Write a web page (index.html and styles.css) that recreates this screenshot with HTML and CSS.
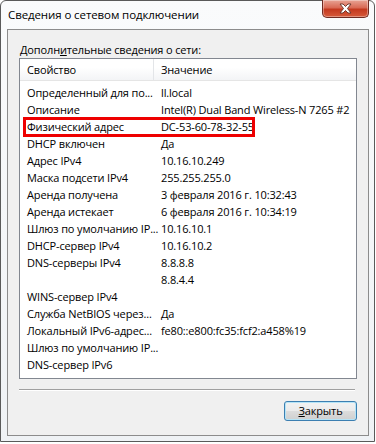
FILE: index.html
```html
<!DOCTYPE html>
<html lang="ru">
<head>
    <meta charset="UTF-8">
    <title>Сведения о сетевом подключении</title>
    <link rel="stylesheet" href="styles.css">
</head>
<body>
    <div class="window">
        <div class="titlebar">
            <span class="title">Сведения о сетевом подключении</span>
            <button class="close-btn" aria-label="Закрыть">
                <svg width="15" height="11" viewBox="0 0 15 11">
                    <path d="M2 1 L5 1 L7.5 3.5 L10 1 L13 1 L9.5 5.5 L13 10 L10 10 L7.5 7.5 L5 10 L2 10 L5.5 5.5 Z" fill="#fff" stroke="#6e3a30" stroke-width="1" stroke-linejoin="round"/>
                </svg>
            </button>
        </div>
        <div class="client">
            <div class="label">Дополн<u>и</u>тельные сведения о сети:</div>
            <div class="list">
                <div class="list-head">
                    <div class="col col-prop">Свойство</div>
                    <div class="col col-val">Значение</div>
                </div>
                <div class="list-body">
                    <div class="row"><div class="col col-prop">Определенный для по...</div><div class="col col-val">ll.local</div></div>
                    <div class="row"><div class="col col-prop">Описание</div><div class="col col-val">Intel(R) Dual Band Wireless-N 7265 #2</div></div>
                    <div class="row marked"><div class="col col-prop">Физический адрес</div><div class="col col-val">DC-53-60-78-32-55</div></div>
                    <div class="row"><div class="col col-prop">DHCP включен</div><div class="col col-val">Да</div></div>
                    <div class="row"><div class="col col-prop">Адрес IPv4</div><div class="col col-val">10.16.10.249</div></div>
                    <div class="row"><div class="col col-prop">Маска подсети IPv4</div><div class="col col-val">255.255.255.0</div></div>
                    <div class="row"><div class="col col-prop">Аренда получена</div><div class="col col-val">3 февраля 2016 г. 10:32:43</div></div>
                    <div class="row"><div class="col col-prop">Аренда истекает</div><div class="col col-val">6 февраля 2016 г. 10:34:19</div></div>
                    <div class="row"><div class="col col-prop">Шлюз по умолчанию IP...</div><div class="col col-val">10.16.10.1</div></div>
                    <div class="row"><div class="col col-prop">DHCP-сервер IPv4</div><div class="col col-val">10.16.10.2</div></div>
                    <div class="row"><div class="col col-prop">DNS-серверы IPv4</div><div class="col col-val">8.8.8.8</div></div>
                    <div class="row"><div class="col col-prop"></div><div class="col col-val">8.8.4.4</div></div>
                    <div class="row"><div class="col col-prop">WINS-сервер IPv4</div><div class="col col-val"></div></div>
                    <div class="row"><div class="col col-prop">Служба NetBIOS через...</div><div class="col col-val">Да</div></div>
                    <div class="row"><div class="col col-prop">Локальный IPv6-адрес...</div><div class="col col-val">fe80::e800:fc35:fcf2:a458%19</div></div>
                    <div class="row"><div class="col col-prop">Шлюз по умолчанию IP...</div><div class="col col-val"></div></div>
                    <div class="row"><div class="col col-prop">DNS-сервер IPv6</div><div class="col col-val"></div></div>
                </div>
            </div>
            <div class="separator"></div>
            <div class="actions">
                <button class="btn"><u>З</u>акрыть</button>
            </div>
        </div>
    </div>
</body>
</html>
```

FILE: styles.css
```css
body {
    margin: 0;
    padding: 0;
    background: #ffffff;
    font-family: "Open Sans", "Noto Sans", sans-serif;
    font-size: 11px;
    letter-spacing: -0.15px;
    color: #000;
}

.window {
    width: 375px;
    height: 442px;
    box-sizing: border-box;
    border: 1px solid #5a5a5a;
    border-radius: 6px 6px 0 0;
    background: linear-gradient(#fafbfc, #eff2f5);
    padding: 0 5px 5px 6px;
    display: flex;
    flex-direction: column;
}

.titlebar {
    height: 28px;
    display: flex;
    align-items: center;
    justify-content: space-between;
    position: relative;
}

.title {
    padding-left: 1px;
    margin-top: -2px;
    font-size: 11.5px;
    letter-spacing: -0.1px;
}

.close-btn {
    position: absolute;
    top: -1px;
    right: 0;
    width: 47px;
    height: 18px;
    border: 1px solid #6f2b22;
    border-top: none;
    border-radius: 0 0 5px 5px;
    background: linear-gradient(#e8a394 0%, #d96a55 45%, #c4391f 55%, #d65a3a 100%);
    box-shadow: inset 0 0 0 1px rgba(255, 255, 255, 0.35);
    padding: 0;
    display: flex;
    align-items: center;
    justify-content: center;
}

.client {
    flex: 1;
    border: 1px solid #8c8c8c;
    background: #f0f0f0;
    padding: 12px 11px 0 11px;
    display: flex;
    flex-direction: column;
}

.label {
    line-height: 16px;
    height: 16px;
    padding-left: 1px;
}

.list {
    height: 321px;
    box-sizing: border-box;
    border: 1px solid #828790;
    background: #ffffff;
    display: flex;
    flex-direction: column;
}

.list-head {
    height: 22px;
    display: flex;
    background: linear-gradient(#ffffff 40%, #f3f4f6);
    border-bottom: 1px solid #e5e5e5;
    box-sizing: border-box;
    line-height: 21px;
}

.list-head .col-prop {
    border-right: 1px solid #e3e5e8;
}

.list-body {
    padding-top: 3px;
}

.row {
    display: flex;
    height: 17px;
    line-height: 17px;
}

.col {
    white-space: nowrap;
    box-sizing: border-box;
    padding-left: 7px;
}

.col-prop {
    width: 134px;
    flex: none;
    overflow: visible;
}

.col-val {
    flex: 1;
    overflow: hidden;
}

.marked {
    position: relative;
}

.marked::after {
    content: "";
    position: absolute;
    left: 3px;
    top: -1px;
    width: 232px;
    height: 20px;
    box-sizing: border-box;
    border: 3px solid #ee0000;
}

.separator {
    margin-top: 10px;
    border-top: 1px solid #a0a0a0;
    border-bottom: 1px solid #ffffff;
    margin-right: 2px;
}

.actions {
    display: flex;
    justify-content: flex-end;
    padding-top: 10px;
}

.btn {
    width: 73px;
    height: 20px;
    font-family: inherit;
    font-size: 11px;
    letter-spacing: inherit;
    line-height: 16px;
    padding: 0;
    border: 1px solid #3c7fb1;
    border-radius: 3px;
    background: linear-gradient(#f2f2f2 0%, #ebebeb 49%, #dddddd 50%, #cfcfcf 100%);
    box-shadow: inset 0 0 0 1px #b5e4f7;
    color: #000;
}
```
